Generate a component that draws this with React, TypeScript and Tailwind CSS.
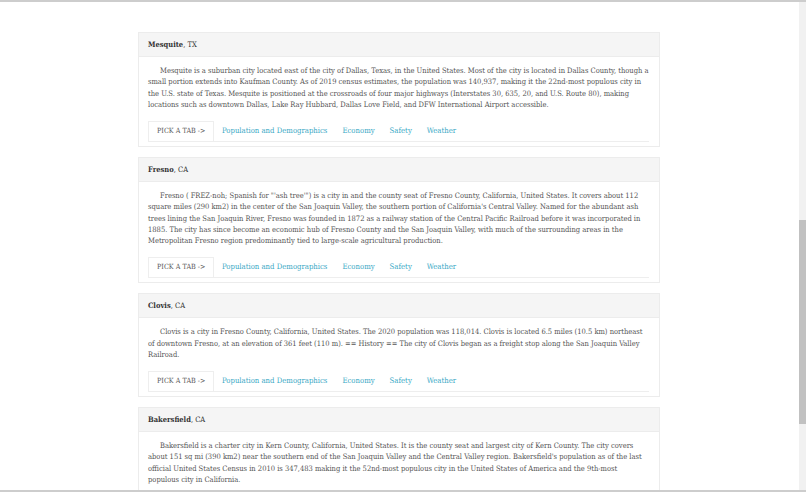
import React from 'react';

type City = {
  name: string;
  state: string;
  text: string;
};

const cities: City[] = [
  {
    name: 'Mesquite',
    state: 'TX',
    text: 'Mesquite is a suburban city located east of the city of Dallas, Texas, in the United States. Most of the city is located in Dallas County, though a small portion extends into Kaufman County. As of 2019 census estimates, the population was 140,937, making it the 22nd-most populous city in the U.S. state of Texas. Mesquite is positioned at the crossroads of four major highways (Interstates 30, 635, 20, and U.S. Route 80), making locations such as downtown Dallas, Lake Ray Hubbard, Dallas Love Field, and DFW International Airport accessible.',
  },
  {
    name: 'Fresno',
    state: 'CA',
    text: 'Fresno ( FREZ-noh; Spanish for "\'ash tree\'") is a city in and the county seat of Fresno County, California, United States. It covers about 112 square miles (290 km2) in the center of the San Joaquin Valley, the southern portion of California\'s Central Valley. Named for the abundant ash trees lining the San Joaquin River, Fresno was founded in 1872 as a railway station of the Central Pacific Railroad before it was incorporated in 1885. The city has since become an economic hub of Fresno County and the San Joaquin Valley, with much of the surrounding areas in the Metropolitan Fresno region predominantly tied to large-scale agricultural production.',
  },
  {
    name: 'Clovis',
    state: 'CA',
    text: 'Clovis is a city in Fresno County, California, United States. The 2020 population was 118,014. Clovis is located 6.5 miles (10.5 km) northeast of downtown Fresno, at an elevation of 361 feet (110 m). == History == The city of Clovis began as a freight stop along the San Joaquin Valley Railroad.',
  },
  {
    name: 'Bakersfield',
    state: 'CA',
    text: "Bakersfield is a charter city in Kern County, California, United States. It is the county seat and largest city of Kern County. The city covers about 151 sq mi (390 km2) near the southern end of the San Joaquin Valley and the Central Valley region. Bakersfield's population as of the last official United States Census in 2010 is 347,483 making it the 52nd-most populous city in the United States of America and the 9th-most populous city in California.",
  },
];

const tabLinks = ['Population and Demographics', 'Economy', 'Safety', 'Weather'];

const CityCard: React.FC<{ city: City }> = ({ city }) => {
  return (
    <div className="border border-[#ececec] bg-white">
      <div className="h-6 flex items-center px-[9px] bg-[#f5f5f5] border-b border-[#ececec] text-[#333]">
        <span className="font-bold">{city.name}</span>
        <span>, {city.state}</span>
      </div>
      <div className="px-[9px] pt-2 pb-1">
        <p className="indent-3 leading-[11.25px] text-[#555]">{city.text}</p>
        <div className="mt-[11px] mr-[1px] flex border-b border-[#eeeeee]">
          <div className="h-5 px-2 flex items-center border border-b-0 border-[#eeeeee] -mb-px bg-white text-[#555] text-[7.2px]">
            PICK A TAB -&gt;
          </div>
          {tabLinks.map((t) => (
            <a key={t} className="h-5 px-[7.5px] flex items-center text-[#3aa9c6] text-[7.7px] cursor-pointer">
              {t}
            </a>
          ))}
        </div>
      </div>
    </div>
  );
};

export default function App() {
  return (
    <div
      className="h-[492px] w-[806px] overflow-hidden flex border-t-2 border-b-2 border-[#cdcdcd] bg-white text-[7.5px]"
      style={{ fontFamily: '"DejaVu Serif Condensed", "DejaVu Serif", serif', fontStretch: 'condensed' }}
    >
      <div className="flex-1 overflow-hidden pt-[30px] pl-[138px] pr-[139px]">
        <div className="flex flex-col gap-[10px]">
          {cities.map((c) => (
            <CityCard key={c.name} city={c} />
          ))}
        </div>
      </div>
      <div className="w-[7px] bg-[#f1f1f1] flex flex-col">
        <div className="h-[218px]" />
        <div className="h-[204px] bg-[#c1c1c1]" />
      </div>
    </div>
  );
}
